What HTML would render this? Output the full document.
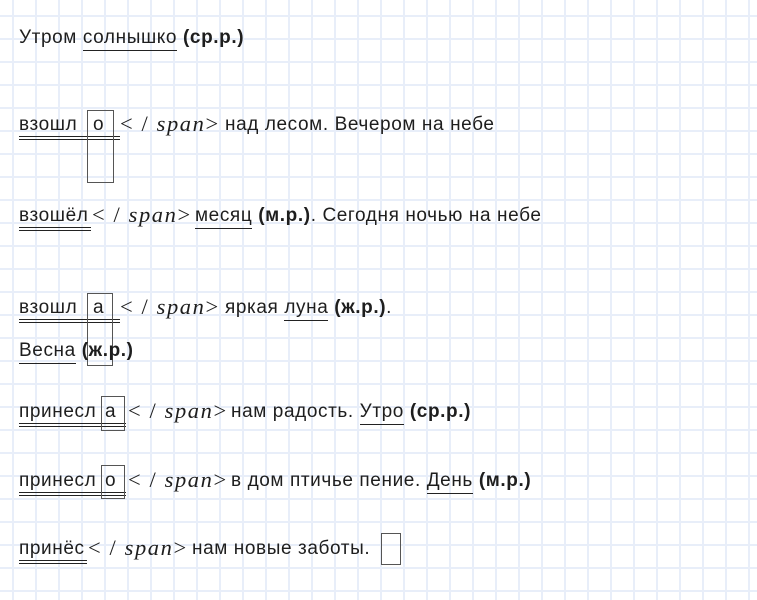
<!DOCTYPE html>
<html><head><meta charset="utf-8"><style>
html,body{margin:0;padding:0}
body{width:757px;height:600px;overflow:hidden;position:relative;background-color:#fff;
background-image:linear-gradient(to right,#e8eef9 2px,transparent 2px),linear-gradient(to bottom,#e8eef9 2px,transparent 2px);
background-size:23px 23px;background-position:12px 15px;
font-family:"Liberation Sans",Arial,sans-serif;color:#1e1e1e}
.l{position:absolute;white-space:nowrap;font-size:19px;line-height:24px;letter-spacing:0.6px}
.u{border-bottom:1px solid #222;padding-bottom:2px}
.uu{position:absolute;height:4px;border-top:1px solid #222;border-bottom:1px solid #222;box-sizing:border-box}
.m{position:absolute;white-space:nowrap;font-family:"Liberation Serif",serif;font-size:22.5px;line-height:24px;letter-spacing:1.6px}
.m i{font-style:italic}
.bx{position:absolute;border:1.5px solid #555;box-sizing:border-box}
</style></head><body>
<div class="l" style="left:19px;top:26px">Утром <span class="u">солнышко</span> <b>(ср.р.)</b></div>

<div class="l" style="left:19px;top:113px">взошл</div>
<div class="l" style="left:93px;top:113px">о</div>
<div class="uu" style="left:19px;top:136px;width:101px"></div>
<div class="m" style="left:120px;top:112px">&lt; / <i>span</i>&gt;</div>
<div class="l" style="left:225px;top:113px">над лесом. Вечером на небе</div>
<div class="bx" style="left:87px;top:110px;width:27px;height:73px"></div>

<div class="l" style="left:19px;top:204px">взошёл</div>
<div class="uu" style="left:19px;top:227px;width:72px"></div>
<div class="m" style="left:92px;top:203px">&lt; / <i>span</i>&gt;</div>
<div class="l" style="left:195px;top:204px"><span class="u">месяц</span> <b>(м.р.)</b>. Сегодня ночью на небе</div>

<div class="l" style="left:19px;top:296px">взошл</div>
<div class="l" style="left:93px;top:296px">а</div>
<div class="uu" style="left:19px;top:319px;width:101px"></div>
<div class="m" style="left:120px;top:295px">&lt; / <i>span</i>&gt;</div>
<div class="l" style="left:225px;top:296px">яркая <span class="u">луна</span> <b>(ж.р.)</b>.</div>
<div class="bx" style="left:87px;top:293px;width:26px;height:73px"></div>

<div class="l" style="left:19px;top:339px"><span class="u">Весна</span> <b>(ж.р.)</b></div>

<div class="l" style="left:19px;top:400px">принесл</div>
<div class="l" style="left:105px;top:400px">а</div>
<div class="uu" style="left:19px;top:423px;width:107px"></div>
<div class="m" style="left:128px;top:399px">&lt; / <i>span</i>&gt;</div>
<div class="l" style="left:231px;top:400px">нам радость. <span class="u">Утро</span> <b>(ср.р.)</b></div>
<div class="bx" style="left:101px;top:396px;width:24px;height:35px"></div>

<div class="l" style="left:19px;top:469px">принесл</div>
<div class="l" style="left:105px;top:469px">о</div>
<div class="uu" style="left:19px;top:492px;width:107px"></div>
<div class="m" style="left:128px;top:468px">&lt; / <i>span</i>&gt;</div>
<div class="l" style="left:231px;top:469px">в дом птичье пение. <span class="u">День</span> <b>(м.р.)</b></div>
<div class="bx" style="left:101px;top:465px;width:24px;height:34px"></div>

<div class="l" style="left:19px;top:537px">принёс</div>
<div class="uu" style="left:19px;top:560px;width:68px"></div>
<div class="m" style="left:88px;top:536px">&lt; / <i>span</i>&gt;</div>
<div class="l" style="left:192px;top:537px">нам новые заботы.</div>
<div class="bx" style="left:381px;top:533px;width:20px;height:32px"></div>
</body></html>
